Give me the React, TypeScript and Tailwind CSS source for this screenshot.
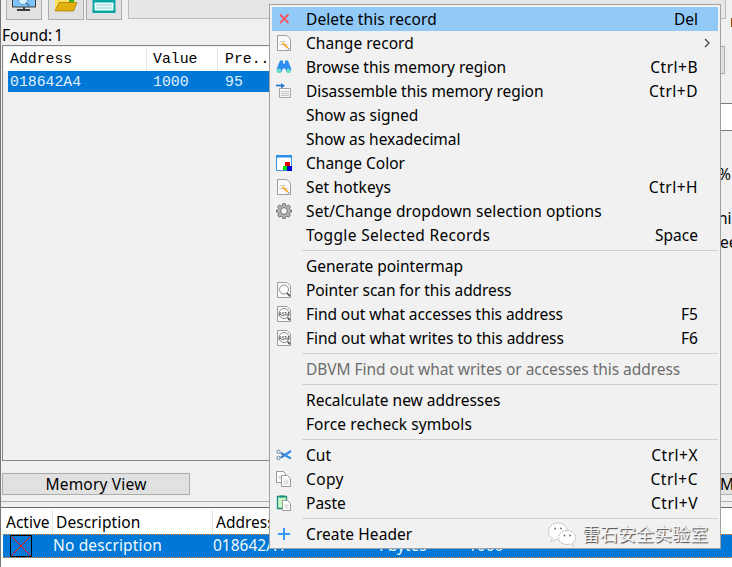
import type { ReactNode } from "react";

type IconName =
  | "delete" | "edit" | "binoculars" | "disassemble" | "color" | "gear"
  | "scan" | "asm" | "cut" | "copy" | "paste" | "plus";

function Icon({ name }: { name: IconName }) {
  const page = <path d="M1.5.5h9.5l3.5 3.5v11.5h-13z" fill="#fafafa" stroke="#9d9d9d" />;
  const glyphs: Record<IconName, ReactNode> = {
    delete: <path d="M4 3.5l8.500 8.500M12.500 3.500L4 12" stroke="#fb5562" strokeWidth="1.900" />,
    edit: (
      <>
        {page}
        <path d="M4 6.500h6M3 9.500h5M9 9.500h3" stroke="#cfcfcf" />
        <path d="M6.500 8l5.500 5" stroke="#f9ad2e" strokeWidth="1.900" />
        <path d="M12 13l1.300 1.300" stroke="#666" />
      </>
    ),
    binoculars: (
      <>
        <path d="M4 1.500h3v3h2v-3h3l3.500 9-2 3.500-3-1-1.500-3.500H7L5.500 13l-3 1L.5 10.500z" fill="#2d8cf0" />
        <circle cx="3" cy="11.800" r="2.300" fill="#62dfc4" />
        <circle cx="12.500" cy="11.800" r="2.300" fill="#62dfc4" />
      </>
    ),
    disassemble: (
      <>
        <path d="M3.500 5.500h11v9h-11z" fill="#f5f5f5" stroke="#a5a5a5" />
        <path d="M5 8.500h8M5 10.500h8M5 12.500h8" stroke="#c4c4c4" />
        <path d="M0 2.500h5" stroke="#2878c8" strokeWidth="1.700" />
        <path d="M5 0l4 2.700L5 5.500z" fill="#2878c8" />
      </>
    ),
    color: (
      <>
        <path d="M.5.5h15v15H.5z" fill="#fff" stroke="#3f95de" />
        <path d="M0 0h16v2.500H0z" fill="#2b8de6" />
        <path d="M9 7h5v4H9z" fill="#e00000" />
        <path d="M7 11h4v4H7z" fill="#00e000" />
        <path d="M11 11h5v5h-5z" fill="#0000d8" />
      </>
    ),
    gear: (
      <>
        <path d="M6.800.7h2.400l.5 2 1.200.5 1.800-1.100 1.600 1.700-1 1.700.5 1.200 1.700.4v2l-1.800.5-.5 1.200 1.100 1.700-1.700 1.700-1.700-1.100-1.200.5-.5 1.900H6.800l-.5-1.900-1.200-.5-1.700 1.100-1.700-1.700 1.100-1.700-.5-1.200-1.800-.5v-2l1.800-.4.500-1.200-1.100-1.700 1.600-1.700 1.800 1.100 1.200-.5z" fill="#b5b5b5" stroke="#666" strokeWidth=".9" />
        <circle cx="8" cy="8" r="3.400" fill="#f4f4f4" stroke="#707070" />
      </>
    ),
    scan: (
      <>
        {page}
        <circle cx="8" cy="7.500" r="4.500" fill="#fff" stroke="#8a8a8a" />
        <path d="M11 11l3 3.300" stroke="#444" strokeWidth="1.500" />
      </>
    ),
    asm: (
      <>
        {page}
        <circle cx="8" cy="7.500" r="5" fill="#fff" stroke="#8c8c8c" />
        <text x="8" y="9.600" textAnchor="middle" textLength="11" lengthAdjust="spacingAndGlyphs" fontSize="6" fill="#333">ASM</text>
        <path d="M11.500 11.500l2.500 2.800" stroke="#444" strokeWidth="1.500" />
      </>
    ),
    cut: (
      <>
        <path d="M5 6l10 5.500M5 10.500l10-6.500" stroke="#2f8de8" strokeWidth="2.100" />
        <path d="M4.500 6l4 2.200-4 2.300" stroke="#5a7894" />
        <circle cx="2.500" cy="4.800" r="1.700" stroke="#6585a2" />
        <circle cx="2.500" cy="11" r="1.700" stroke="#6585a2" />
      </>
    ),
    copy: (
      <>
        <path d="M.5.5h7l2 2v9h-9z" fill="#fff" stroke="#999" />
        <path d="M2.500 5.500h3M2.500 7.500h3" stroke="#c4c4c4" />
        <path d="M5.500 4.500h6l3 3v8h-9z" fill="#fff" stroke="#999" />
        <path d="M7.500 8.500h5v5h-5z" fill="#e2e2e2" />
      </>
    ),
    paste: (
      <>
        <path d="M1.500 1.500h9v12h-9z" fill="#c8f7c8" stroke="#1b8a78" strokeWidth="1.300" />
        <path d="M3.500.5h5v2h-5z" fill="#1b8a78" />
        <path d="M6.500 5.500h5l3 3v7h-8z" fill="#fff" stroke="#999" />
        <path d="M8.500 9h4v4.500h-4z" fill="#e2e2e2" />
      </>
    ),
    plus: <path d="M8 2v12M2 8h12" stroke="#3399ff" strokeWidth="2" />,
  };
  return <svg className="size-4 shrink-0" viewBox="0 0 16 16" fill="none">{glyphs[name]}</svg>;
}

interface Item {
  label: string;
  spacing: string;
  icon?: IconName;
  keys?: string;
  active?: boolean;
  disabled?: boolean;
  submenu?: boolean;
}

const groups: Item[][] = [
  [
    { label: "Delete this record", spacing: "tracking-[0.1px]", icon: "delete", keys: "Del", active: true },
    { label: "Change record", spacing: "tracking-[0.04px]", icon: "edit", submenu: true },
    { label: "Browse this memory region", spacing: "tracking-[-0.04px]", icon: "binoculars", keys: "Ctrl+B" },
    { label: "Disassemble this memory region", spacing: "tracking-[-0.06px]", icon: "disassemble", keys: "Ctrl+D" },
    { label: "Show as signed", spacing: "tracking-normal" },
    { label: "Show as hexadecimal", spacing: "tracking-[-0.05px]" },
    { label: "Change Color", spacing: "tracking-normal", icon: "color" },
    { label: "Set hotkeys", spacing: "tracking-[0.15px]", icon: "edit", keys: "Ctrl+H" },
    { label: "Set/Change dropdown selection options", spacing: "tracking-[0.12px]", icon: "gear" },
    { label: "Toggle Selected Records", spacing: "tracking-[0.34px]", keys: "Space" },
  ],
  [
    { label: "Generate pointermap", spacing: "tracking-[-0.03px]" },
    { label: "Pointer scan for this address", spacing: "tracking-[-0.07px]", icon: "scan" },
    { label: "Find out what accesses this address", spacing: "tracking-[-0.07px]", icon: "asm", keys: "F5" },
    { label: "Find out what writes to this address", spacing: "tracking-[-0.04px]", icon: "asm", keys: "F6" },
  ],
  [{ label: "DBVM Find out what writes or accesses this address", spacing: "tracking-[-0.04px]", disabled: true }],
  [
    { label: "Recalculate new addresses", spacing: "tracking-normal" },
    { label: "Force recheck symbols", spacing: "tracking-[0.08px]" },
  ],
  [
    { label: "Cut", spacing: "tracking-normal", icon: "cut", keys: "Ctrl+X" },
    { label: "Copy", spacing: "tracking-[0.4px]", icon: "copy", keys: "Ctrl+C" },
    { label: "Paste", spacing: "tracking-normal", icon: "paste", keys: "Ctrl+V" },
  ],
  [{ label: "Create Header", spacing: "tracking-[0.08px]", icon: "plus" }],
];

function Row({ item }: { item: Item }) {
  const tone = item.disabled ? "text-[#6d6d6d]" : "text-black";
  return (
    <div className={`flex h-6 items-center pr-[20px] pl-[4px] leading-6 ${tone} ${item.active ? "bg-[#91c9f7]" : ""}`}>
      <span className="flex w-[30px] shrink-0">{item.icon && <Icon name={item.icon} />}</span>
      <span className={`grow whitespace-nowrap ${item.spacing}`}>{item.label}</span>
      {item.keys && <span className={`whitespace-nowrap ${item.keys.length > 5 ? "tracking-[0.5px]" : "tracking-normal"}`}>{item.keys}</span>}
      {item.submenu && (
        <svg className="mr-[-13px] h-[10px] w-[8px]" viewBox="0 0 8 10" fill="none">
          <path d="M2 1l4 4-4 4" stroke="#444" strokeWidth="1.300" />
        </svg>
      )}
    </div>
  );
}

export default function App() {
  return (
    <div className="relative flex h-[567px] w-[732px] flex-col overflow-hidden border-l border-[#777] bg-[#f0f0f0] font-['Noto_Sans','Noto_Sans_CJK_SC',sans-serif] text-[15.5px] text-black">
      <div className="flex h-[26px] shrink-0 items-start pl-[5px]">
        <div className="flex h-5 w-9 shrink-0 justify-center border border-t-0 border-[#adadad] bg-[#e1e1e1]">
          <svg className="h-[13px] w-6" viewBox="0 0 24 13">
            <path d="M.5-1h23v8H.5z" fill="#7cc3fb" stroke="#3c3c3c" />
            <path d="M11 7h2v2h5v2H5V9h6z" fill="#3c3c3c" />
            <circle cx="11" cy="0" r="4.500" fill="#d4f1ff" stroke="#6c9cbd" />
            <path d="M14 3l3.500 3" stroke="#41759c" strokeWidth="1.600" />
          </svg>
        </div>
        <div className="ml-[6px] flex h-5 w-9 shrink-0 justify-center border border-t-0 border-[#adadad] bg-[#e1e1e1]">
          <svg className="h-[13px] w-6" viewBox="0 0 24 13">
            <path d="M1 0h20v10H1z" fill="#fbe25f" />
            <path d="M15 0h5v2h-5z" fill="#2fae32" />
            <path d="M5 2.500h18L19.500 11H1z" fill="#e2b00e" stroke="#a97f10" strokeWidth=".8" />
          </svg>
        </div>
        <div className="ml-[2px] flex h-5 w-9 shrink-0 justify-center border border-t-0 border-[#adadad] bg-[#e1e1e1]">
          <svg className="h-[13px] w-6" viewBox="0 0 24 13">
            <path d="M.5 0h23v13H.5z" fill="#09a5a3" />
            <path d="M2.500 2.500h19v8h-19z" fill="#e6ffff" />
            <path d="M4 5h16M4 8h16" stroke="#a3c9cc" />
          </svg>
        </div>
        <div className="ml-[6px] h-[19px] w-[598px] shrink-0 border border-t-0 border-[#bcbcbc] bg-[#e6e6e6]" />
        <span className="ml-[4px] shrink-0 pt-[9px] leading-6">m</span>
      </div>

      <div className="flex h-[475px] shrink-0 justify-between">
        <div className="flex w-[269px] flex-col pl-px">
          <div className="h-[19px] leading-[18px]">Found:<span className="ml-[2px]">1</span></div>
          <div className="flex h-[416px] flex-col overflow-hidden border border-r-0 border-[#828790] pt-px pl-px font-['Liberation_Mono',monospace] text-[14.8px]">
            <div className="flex h-6 shrink-0 bg-white leading-[25px]">
              <span className="w-[143px] shrink-0 border-r border-[#e5e5e5] pl-[6px]">Address</span>
              <span className="w-[71px] shrink-0 border-r border-[#e5e5e5] pl-[6px]">Value</span>
              <span className="pl-[7px]">Pre...</span>
            </div>
            <div className="ml-1 flex h-[21px] shrink-0 bg-[#0078d7] leading-[22px] text-[#e4f1fb]">
              <span className="w-[143px] pl-[2px]">018642A4</span>
              <span className="w-[71px] pl-[2px]">1000</span>
              <span className="pl-[3px]">95</span>
            </div>
          </div>
          <div className="mt-[12px] h-[22px] w-[188px] border border-[#adadad] bg-[#e1e1e1] text-center leading-[21px] tracking-[0.2px]">Memory View</div>
        </div>
        <div className="flex w-[12px] flex-col">
          <div className="mt-[20px] h-[28px] w-[5px] border border-l-0 border-[#adadad] bg-[#e1e1e1]" />
          <div className="mt-[29px] h-[28px] border-y border-[#7a7a7a] bg-white" />
          <span className="mt-[31px] ml-[-2px] h-6 leading-6">%</span>
          <span className="mt-[20px] ml-[-2px] h-6 leading-6">niz</span>
          <span className="h-6 leading-6">ee</span>
          <div className="mt-[219px] h-[22px] border-y border-[#adadad] bg-[#e1e1e1] leading-5">M</div>
        </div>
      </div>

      <div className="flex grow flex-col border-t border-[#adadad] pt-[5px]">
        <div className="flex grow flex-col border-t border-[#696969] bg-white">
          <div className="flex h-[26px] shrink-0 pt-[2px] leading-6">
            <div className="w-[52px] border-r border-[#e5e5e5] pl-[5px]">
              <span className="block w-[44px] overflow-hidden">Active</span>
            </div>
            <span className="w-[160px] border-r border-[#e5e5e5] pl-[3px] tracking-[0.1px]">Description</span>
            <span className="pl-[3px]">Address</span>
          </div>
          <div className="ml-[2px] flex h-6 border-y border-dotted border-[#ff8728] bg-[#0078d7] leading-[21px] text-[#f2f8fd]">
            <svg className="ml-[7px] size-[22px]" viewBox="0 0 22 22">
              <path d="M.5.5h21v21H.5z" fill="none" stroke="#000" />
              <path d="M1.500 1.500l19 19M1.500 20.500l19-19" stroke="#f00" />
            </svg>
            <span className="ml-[21px] w-[160px] tracking-[0.15px]">No description</span>
            <span className="w-[162px]">018642A4</span>
            <span className="w-[93px]">4 bytes</span>
            <span>1000</span>
          </div>
        </div>
      </div>

      <div className="absolute top-[4px] left-[268px] flex h-[545px] w-[452px] flex-col border border-[#a0a0a0] bg-[#f1f1f1] p-[2px]">
        {groups.map((group, index) => (
          <div key={group[0].label} className="flex flex-col">
            {index > 0 && <div className="mt-[3px] mb-[3px] ml-[30px] h-px bg-[#d0d0d0]" />}
            {group.map((item) => <Row key={item.label} item={item} />)}
          </div>
        ))}
      </div>

      <div className="absolute top-[521px] left-[547px] flex items-center text-[18px] leading-7 text-[#f4f4f4] [text-shadow:1px_1px_1px_#444]">
        <svg className="h-[25px] w-[28px]" viewBox="0 0 28 24" fill="#fff" stroke="#8c8c8c" strokeWidth=".6" strokeDasharray="2 1">
          <path d="M10 .5C4.500.500.500 4.500.500 9c0 3 1.500 5.500 4 7l-1 3 4-2 5 .5 7-9C19 4 15 .5 10 .5z" />
          <path d="M19 8c-5 0-8.500 3-8.500 7s3.500 7 8.500 7l3-.5 3.500 2-1-3c2-1.500 3-3.300 3-5.500 0-4-3.500-7-8.500-7z" />
          <g fill="#777" stroke="none"><circle cx="7" cy="6" r="1" /><circle cx="13" cy="6" r="1" /><circle cx="16.500" cy="13" r="1" /><circle cx="22" cy="13" r="1" /></g>
        </svg>
        <span className="mt-[-1px] ml-[6px]">雷石安全实验室</span>
      </div>
    </div>
  );
}
